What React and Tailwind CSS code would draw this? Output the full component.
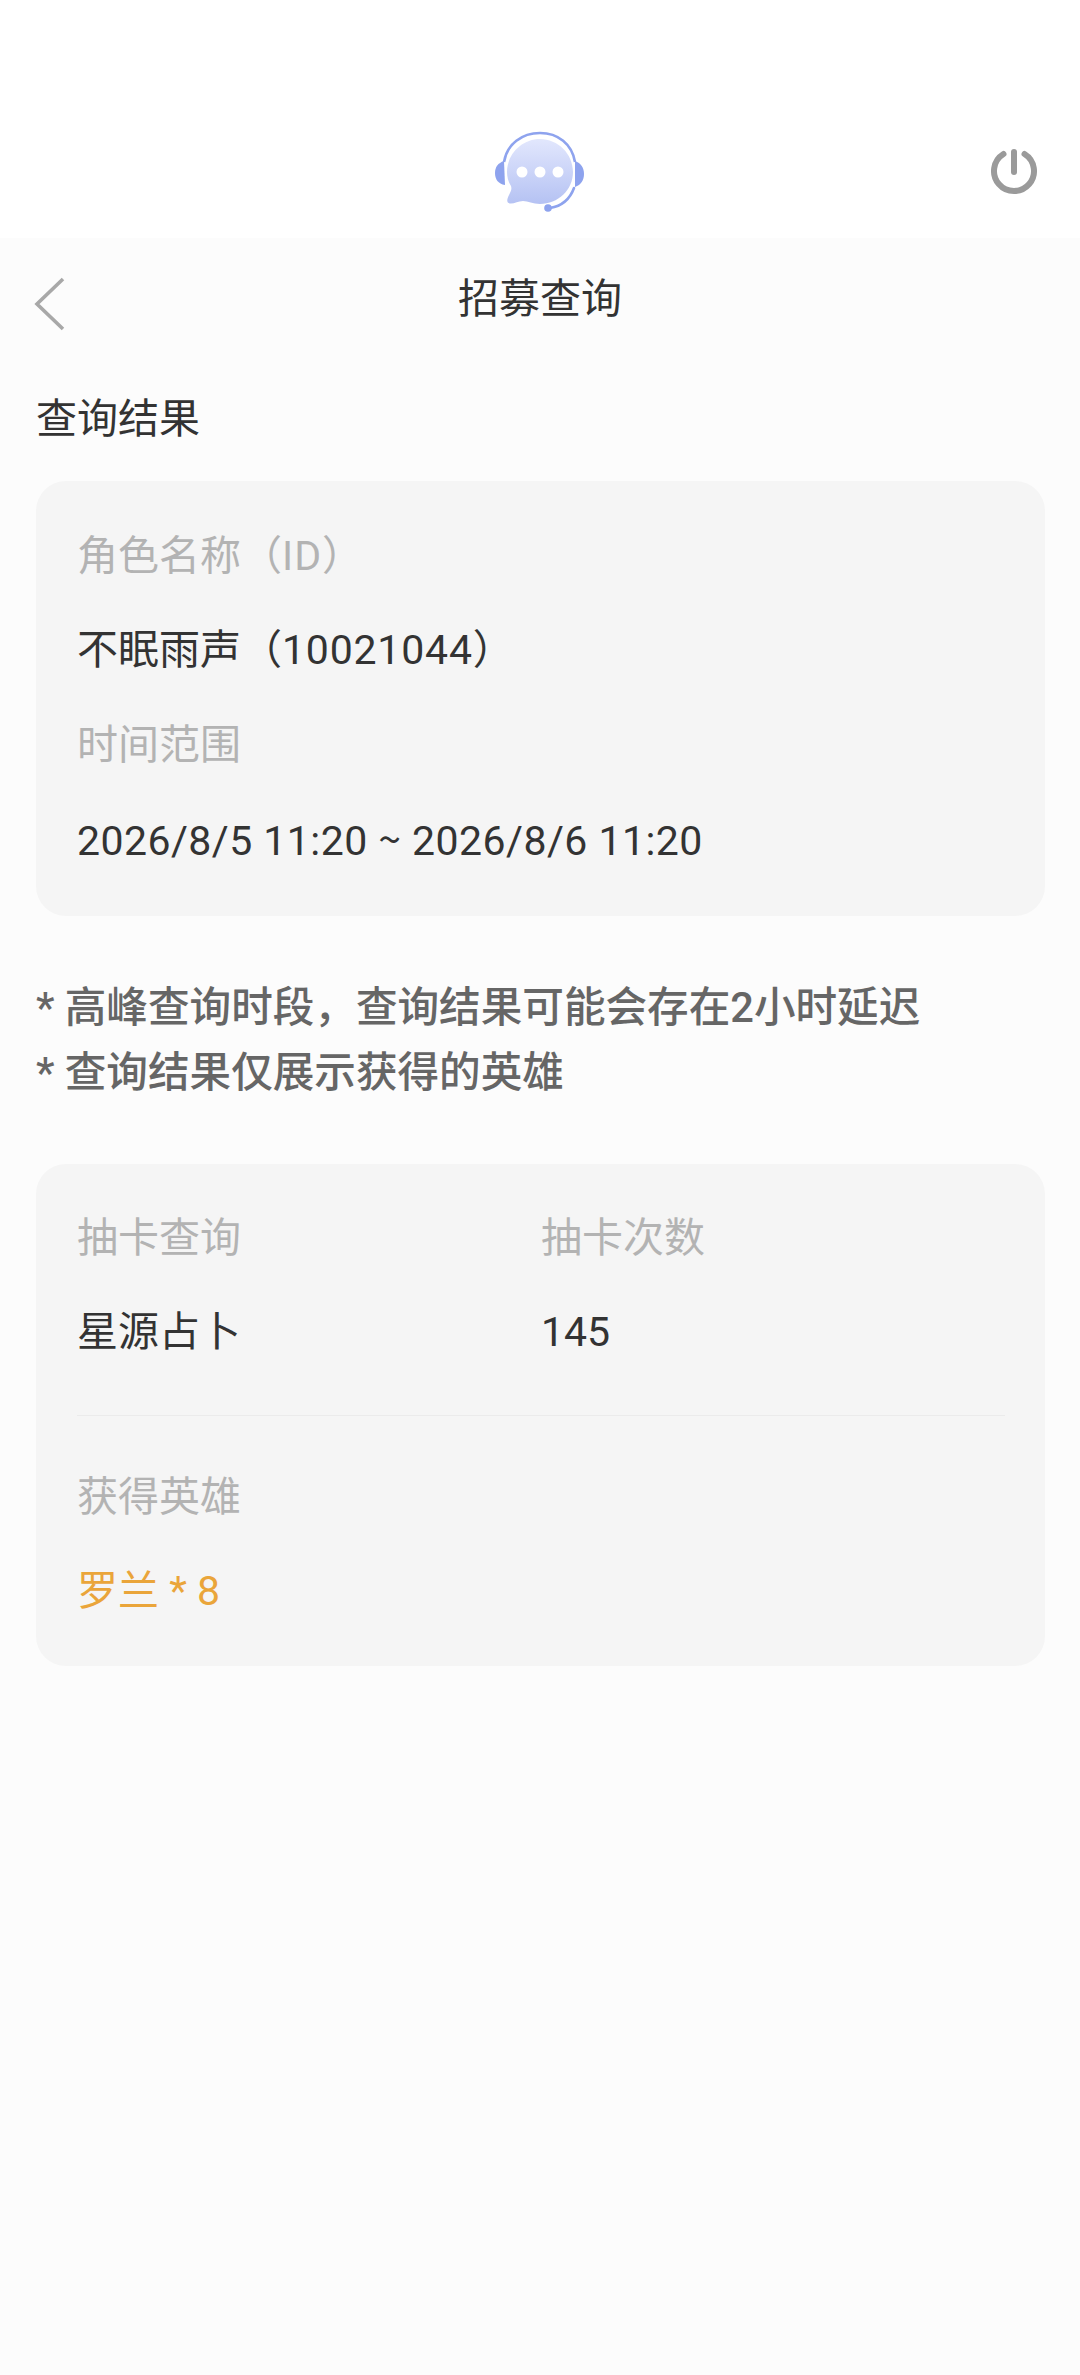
import React from "react";

const font = { fontFamily: 'Roboto, "Noto Sans CJK SC", "Noto Sans", sans-serif' };

function BotLogo() {
  return (
    <svg width="92" height="84" viewBox="0 0 92 84" fill="none">
      <defs>
        <linearGradient id="bubble" x1="0" y1="0" x2="0" y2="1">
          <stop offset="0" stopColor="#e2e7fd" />
          <stop offset="1" stopColor="#b5c2f3" />
        </linearGradient>
      </defs>
      <path d="M10 31 C4 33 1 37 1 43 C1 49 4 54 11 55 Z" fill="#8ea3ee" />
      <path d="M81 31 C87 33 90 38 90 44 C90 50 87 55 81 57 Z" fill="#8ea3ee" />
      <path d="M10 32 C13 14 28 3 46 3 C64 3 78 14 81 32" stroke="#8ea3ee" strokeWidth="2.6" />
      <path d="M80 58 C76 69 68 76 56 78" stroke="#8ea3ee" strokeWidth="2.6" strokeLinecap="round" />
      <circle cx="54" cy="78" r="3.8" fill="#8ea3ee" />
      <path d="M46 9 C64 9 79 24 79 42 C79 60 64 74 46 74 C39 74 34 71 29 71 C24 71 20 74 16 73.5 C12 73 13 69 15 65 C17 61 18 59 17 56 C15 53 13 48 13 42 C13 24 28 9 46 9 Z" fill="url(#bubble)" />
      <circle cx="28" cy="42" r="5.5" fill="#fff" />
      <circle cx="46" cy="42" r="5.5" fill="#fff" />
      <circle cx="64" cy="42" r="5.5" fill="#fff" />
    </svg>
  );
}

function PowerIcon() {
  return (
    <svg width="48" height="46" viewBox="0 0 48 46" fill="none" stroke="#9a9a9a" strokeLinecap="round">
      <path d="M13.5 5 A20 20 0 1 0 34.5 5" strokeWidth="6" />
      <path d="M24 3 V23" strokeWidth="6" />
    </svg>
  );
}

function BackIcon() {
  return (
    <svg width="32" height="54" viewBox="0 0 32 54" fill="none" stroke="#a8a8a8" strokeWidth="3.6">
      <path d="M30 2 L4 27 L30 52" />
    </svg>
  );
}

function Label({ children }) {
  return <div className="h-[94.5px] flex items-center text-[#b3b3b3]">{children}</div>;
}

function Value({ children, color = "text-[#333333]" }) {
  return <div className={`h-[94.5px] flex items-center ${color}`}>{children}</div>;
}

export default function App() {
  return (
    <div className="w-[1080px] min-h-[2375px] bg-[#fcfcfc] text-[41px] leading-none" style={font}>
      <header className="h-[238px] bg-white relative">
        <div className="absolute left-[494px] top-[130px]">
          <BotLogo />
        </div>
        <div className="absolute left-[990px] top-[149px]">
          <PowerIcon />
        </div>
      </header>

      <div className="h-[122px] flex items-center relative">
        <div className="absolute left-[33px] top-[39px]">
          <BackIcon />
        </div>
        <div className="w-full text-center text-[#333333]">招募查询</div>
      </div>

      <div className="pl-9 pr-[35px]">
        <div className="h-[116px] pt-[2px] flex items-center text-[#333333]">查询结果</div>

        <section className="mt-[5px] h-[435px] rounded-[30px] bg-[#f5f5f5] pl-[41px] pr-[40px] pt-[28px]">
          <Label>
            <span>角色名称（<span className="tracking-[1px]">ID</span>）</span>
          </Label>
          <Value>
            <span>不眠雨声（<span className="tracking-[0.8px]">10021044</span>）</span>
          </Value>
          <Label>时间范围</Label>
          <Value>
            <span className="tracking-[0.45px]">
              2026/8/5 11:20 <span className="font-['Noto_Sans_CJK_SC']">~</span> 2026/8/6 11:20
            </span>
          </Value>
        </section>

        <div className="mt-[59px] text-[41.6px] text-[#666666] font-medium">
          <div className="h-[65px] flex items-center">* 高峰查询时段，查询结果可能会存在2小时延迟</div>
          <div className="h-[65px] flex items-center">* 查询结果仅展示获得的英雄</div>
        </div>

        <section className="mt-[59px] h-[502px] rounded-[30px] bg-[#f5f5f5] pl-[41px] pr-[40px] pt-[27px]">
          <div className="grid grid-cols-[464px_1fr]">
            <Label>抽卡查询</Label>
            <Label>抽卡次数</Label>
            <Value>星源占卜</Value>
            <Value>145</Value>
          </div>
          <div className="mt-[35px] border-t border-[#ebebeb]" />
          <div className="mt-[34px]">
            <Label>获得英雄</Label>
            <Value color="text-[#eaa53a]">罗兰 * 8</Value>
          </div>
        </section>
      </div>
    </div>
  );
}
